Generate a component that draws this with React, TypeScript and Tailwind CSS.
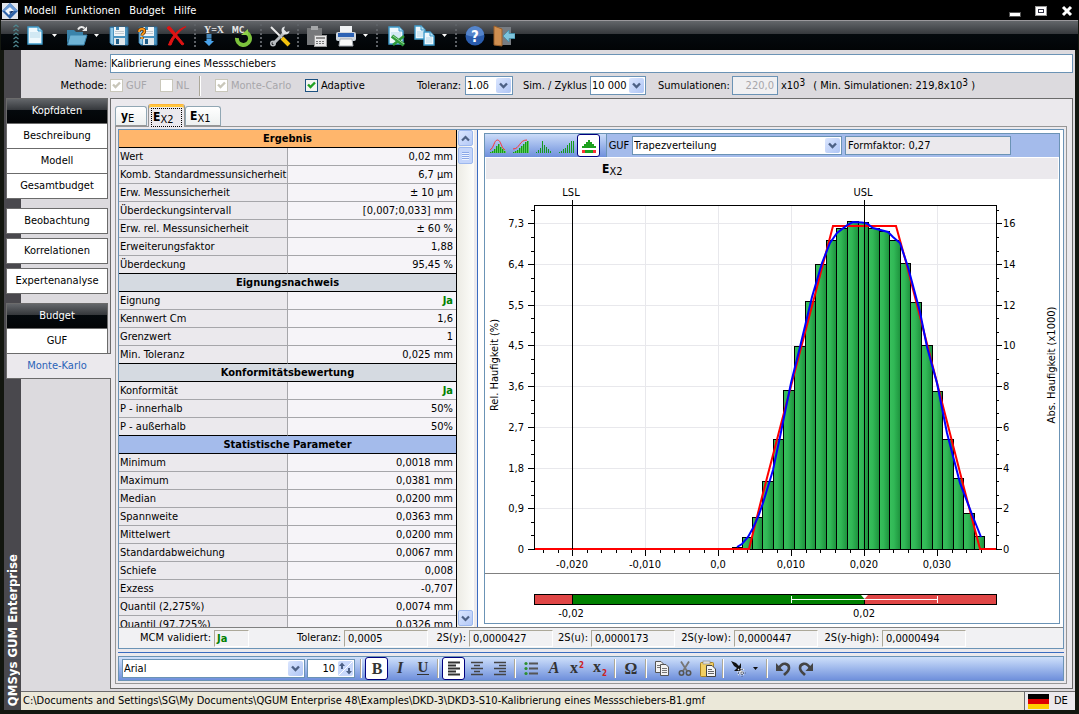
import { ReactNode, useState } from "react";

interface Section {
  title: string;
  tone: string;
  rows: [string, string][];
}

const sections: Section[] = [
  {
    title: "Ergebnis",
    tone: "bg-[#ffb66c]",
    rows: [
      ["Wert", "0,02 mm"],
      ["Komb. Standardmessunsicherheit", "6,7 µm"],
      ["Erw. Messunsicherheit", "± 10 µm"],
      ["Überdeckungsintervall", "[0,007;0,033] mm"],
      ["Erw. rel. Messunsicherheit", "± 60 %"],
      ["Erweiterungsfaktor", "1,88"],
      ["Überdeckung", "95,45 %"],
    ],
  },
  {
    title: "Eignungsnachweis",
    tone: "bg-[#d5dae1]",
    rows: [
      ["Eignung", "Ja"],
      ["Kennwert Cm", "1,6"],
      ["Grenzwert", "1"],
      ["Min. Toleranz", "0,025 mm"],
    ],
  },
  {
    title: "Konformitätsbewertung",
    tone: "bg-[#d5dae1]",
    rows: [
      ["Konformität", "Ja"],
      ["P - innerhalb", "50%"],
      ["P - außerhalb", "50%"],
    ],
  },
  {
    title: "Statistische Parameter",
    tone: "bg-[#a4bbeb]",
    rows: [
      ["Minimum", "0,0018 mm"],
      ["Maximum", "0,0381 mm"],
      ["Median", "0,0200 mm"],
      ["Spannweite", "0,0363 mm"],
      ["Mittelwert", "0,0200 mm"],
      ["Standardabweichung", "0,0067 mm"],
      ["Schiefe", "0,008"],
      ["Exzess", "-0,707"],
      ["Quantil (2,275%)", "0,0074 mm"],
      ["Quantil (97,725%)", "0,0326 mm"],
    ],
  },
];

const checks = [
  { label: "MCM validiert:", value: "Ja", labelClass: "w-[92px]", boxClass: "w-[35px] pl-[2px] font-bold text-[#008000]" },
  { label: "Toleranz:", value: "0,0005", labelClass: "w-[92px]", boxClass: "w-[84px] pl-[3px]" },
  { label: "2S(y):", value: "0,0000427", labelClass: "w-[38px]", boxClass: "w-[84px] pl-[3px]" },
  { label: "2S(u):", value: "0,0000173", labelClass: "w-[35px]", boxClass: "w-[84px] pl-[3px]" },
  { label: "2S(y-low):", value: "0,0000447", labelClass: "w-[56px]", boxClass: "w-[84px] pl-[3px]" },
  { label: "2S(y-high):", value: "0,0000494", labelClass: "w-[61px]", boxClass: "w-[84px] pl-[3px]" },
];

const barEdges = [
  732, 742, 752, 762, 773, 783, 794, 805, 815, 826, 836, 847, 858, 868, 879, 889, 900, 910, 921, 932, 942, 953, 963,
  974, 984,
];
const barTops = [
  547, 537, 517, 481, 439, 390, 346, 301, 264, 240, 228, 221, 222, 228, 231, 240, 263, 302, 345, 391, 439, 478, 513,
  536,
];
const yMajor = [223, 264, 305, 345, 386, 427, 468, 508, 549];
const leftLabels = ["7,3", "6,4", "5,5", "4,5", "3,6", "2,7", "1,8", "0,9", "0"];
const rightLabels = ["16", "14", "12", "10", "8", "6", "4", "2", "0"];
const yMinor = [210, 237, 251, 278, 291, 318, 332, 359, 373, 400, 413, 440, 454, 481, 495, 522, 535];
const xMajor = [572, 645, 718, 791, 864, 937];
const xLabels = ["-0,020", "-0,010", "0,0", "0,010", "0,020", "0,030"];
const xMinor = Array.from({ length: 31 }, (_, i) => Math.round(543 + i * 14.6)).filter((x) => x < 996);

const font = "font-['DejaVu_Sans_Condensed','DejaVu_Sans',sans-serif]";

/* ---------- small controls ---------- */

const Chevron = () => (
  <span className="pointer-events-none absolute top-px right-px bottom-px flex w-[15px] items-center justify-center rounded-xs bg-linear-to-br from-[#dbe6fe] to-[#afc5f5]">
    <svg width="9" height="7" viewBox="0 0 9 7">
      <path d="M1 1.5 4.5 5 8 1.5" fill="none" stroke="#4d6185" strokeWidth="2.4" />
    </svg>
  </span>
);

const Select = ({ id, label, options, className }: { id: string; label: string; options: string[]; className: string }) => (
  <span className={`relative block h-[19px] border border-[#6b93b5] bg-white ${className}`}>
    <select id={id} aria-label={label} className="block h-full w-full appearance-none bg-transparent pl-px outline-none">
      {options.map((option) => (
        <option key={option}>{option}</option>
      ))}
    </select>
    <Chevron />
  </span>
);

interface CheckProps {
  label: string;
  checked?: boolean;
  disabled?: boolean;
  className: string;
}

const Check = ({ label, checked = false, disabled = false, className }: CheckProps) => {
  const [on, setOn] = useState(checked);
  return (
    <label className={`flex items-center gap-[3px] ${disabled ? "text-[#a7a6aa]" : ""} ${className}`}>
      <span className="relative block size-[13px]">
        <input
          type="checkbox"
          checked={on}
          disabled={disabled}
          onChange={() => setOn(!on)}
          className={`block size-[13px] appearance-none border ${disabled ? "border-[#c9c7ba] bg-white" : "border-[#1c5180] bg-[#f4f4f1]"}`}
        />
        {on && (
          <svg className="pointer-events-none absolute inset-0" width="13" height="13" viewBox="0 0 13 13">
            <path d="M3 5.5 5.5 8 10 3.5" fill="none" stroke={disabled ? "#c9c7ba" : "#21a121"} strokeWidth="2.4" />
          </svg>
        )}
      </span>
      {label}
    </label>
  );
};

const DarkButton = ({ label, children }: { label: string; children: ReactNode }) => (
  <button type="button" aria-label={label} className="flex h-full w-[29px] items-center justify-center">
    <svg width="22" height="22" viewBox="0 0 22 22">
      {children}
    </svg>
  </button>
);

const Caret = ({ color }: { color: string }) => (
  <button type="button" aria-label="Mehr" className="mr-[2px] flex h-full w-[11px] items-center justify-center">
    <svg width="5" height="3" viewBox="0 0 5 3">
      <path d="M0 0H5L2.5 3Z" fill={color} />
    </svg>
  </button>
);

const Dots = () => (
  <span className="flex h-full w-2 justify-center py-[3px]">
    <span className="border-l-2 border-dotted border-[#5d6166]" />
  </span>
);

const EditButton = ({ label, active = false, children }: { label: string; active?: boolean; children: ReactNode }) => (
  <button
    type="button"
    aria-label={label}
    aria-pressed={active}
    className={`flex size-[23px] shrink-0 items-center justify-center ${active ? "rounded-[3px] border border-[#00007f] bg-white" : ""}`}
  >
    <svg width="18" height="18" viewBox="0 0 18 18" className="shrink-0">
      {children}
    </svg>
  </button>
);

const Groove = () => (
  <span className="flex h-[19px] w-2 justify-center">
    <span className="border-l border-r border-l-[#aca899] border-r-white" />
  </span>
);

const Variable = ({ main, sub }: { main: string; sub: string }) => (
  <span className="whitespace-nowrap">
    <b className="text-xs">{main}</b>
    <span className="relative top-[2px] text-[11px]">{sub}</span>
  </span>
);

const Cubed = () => <span className="relative -top-[3px] text-[10px]">3</span>;

/* ---------- icon parts ---------- */

const Floppy = () => (
  <>
    <path d="M2 2H20V20H4L2 18Z" fill="#4a93c0" stroke="#2b6b97" />
    <path d="M2.5 3H5V19H4L2.5 17.5Z" fill="#8cc6e6" />
    <rect x="6" y="2" width="11" height="9" fill="#f2f5f7" />
    <rect x="8" y="2" width="3" height="3" fill="#3d86b4" />
    <path d="M7 6.500H16M7 8.500H16" stroke="#c2cbd2" />
    <rect x="6" y="13" width="11" height="7" fill="#dfe6ea" />
    <rect x="8" y="14" width="3" height="5" fill="#1f5e8a" />
  </>
);

const Page = ({ x, y, w, h }: { x: number; y: number; w: number; h: number }) => (
  <g>
    <path
      d={`M${x} ${y}H${x + w - 4}L${x + w} ${y + 4}V${y + h}H${x}Z`}
      fill="#eef8fd"
      stroke="#3f9ccc"
      strokeWidth="1.4"
    />
    <path d={`M${x + w - 4} ${y}V${y + 4}H${x + w}`} fill="#b9e0f3" stroke="#3f9ccc" />
    <path d={`M${x + 2} ${y + 6}H${x + w - 2}M${x + 2} ${y + 8}H${x + w - 2}M${x + 2} ${y + 10}H${x + w - 2}`} stroke="#b5d9ea" />
  </g>
);

const Columns = ({ heights, filled = false }: { heights: number[]; filled?: boolean }) => (
  <g shapeRendering="crispEdges">
    {heights.map((h, i) => (
      <g key={i}>
        {filled && <rect x={2 + i * 2} y={16 - h} width="2" height={h} fill="#5fc95f" />}
        <rect x={2 + i * 2} y={16 - h} width="1" height={h} fill="#159a1c" />
      </g>
    ))}
  </g>
);

/* ---------- window chrome ---------- */

const TitleBar = () => (
  <header className="flex h-5 items-center bg-black pt-px pr-[6px] pl-[2px] text-white">
    <svg width="16" height="16" viewBox="0 0 16 16">
      <rect width="16" height="16" fill="#dfe3ea" />
      <path d="M8 0 16 8 8 16 0 8Z" fill="#2e62a8" />
      <path d="M8 0 16 8H12L8 4 4 8H0Z" fill="#6b9ad4" />
      <path d="M8 4 12 8 9 11V8.500H7L8 10.500 7 12 3 8Z" fill="#f4f7fb" />
      <path d="M9 11 12 8H8.500V10Z" fill="#173a70" />
    </svg>
    <nav className="ml-[6px] flex gap-[9px]">
      {["Modell", "Funktionen", "Budget", "Hilfe"].map((item) => (
        <button key={item} type="button">
          {item}
        </button>
      ))}
    </nav>
    <div className="ml-auto flex gap-[14px]">
      <button type="button" aria-label="Minimieren">
        <svg width="12" height="12" viewBox="0 0 12 12">
          <rect x="0.500" y="7.500" width="11" height="4" fill="#fff" stroke="#555" />
        </svg>
      </button>
      <button type="button" aria-label="Maximieren">
        <svg width="12" height="12" viewBox="0 0 12 12">
          <rect x="0.500" y="1.500" width="11" height="9" fill="#fff" stroke="#999" />
          <rect x="3.500" y="4.500" width="5" height="3" fill="#fff" stroke="#334" />
        </svg>
      </button>
      <button type="button" aria-label="Schließen">
        <svg width="12" height="12" viewBox="0 0 12 12">
          <path d="M2 2 10 10M10 2 2 10" stroke="#fff" strokeWidth="3" />
        </svg>
      </button>
    </div>
  </header>
);

const MainToolbar = () => (
  <div className="mx-px flex h-[30px] items-center border-t border-[#9a989c] bg-[linear-gradient(#63666a,#34373b_46%,#04090d_46%,#020406)] pl-[11px]">
    <svg width="8" height="24" viewBox="0 0 8 24" className="shrink-0">
      {[1, 5, 9, 13, 17, 21].map((y) => (
        <path key={y} d={`M1.500 ${y + 2}L4 ${y}L6.500 ${y + 2}`} fill="none" stroke="#4f8790" strokeWidth="1.200" />
      ))}
    </svg>
    <DarkButton label="Neu">
      <Page x={4} y={2} w={14} h={17} />
    </DarkButton>
    <Caret color="#fff" />
    <DarkButton label="Öffnen">
      <path d="M1 5H8L10 7H17V10H4L1 19Z" fill="#3a83ab" />
      <path d="M4 10H21L18 20H1.500Z" fill="#6fb3d5" stroke="#3a83ab" />
      <path d="M12 4.500C14 1 17 1.500 18.500 3.500" fill="none" stroke="#eee" strokeWidth="2" />
      <path d="M16 6H21V1.500Z" fill="#eee" />
    </DarkButton>
    <Caret color="#fff" />
    <DarkButton label="Speichern">
      <Floppy />
    </DarkButton>
    <DarkButton label="Speichern unter">
      <Floppy />
      <path d="M2 7C2 3 8 3 7.500 6.500C7.300 8.500 5 8.500 5 10.500M5 12V14" fill="none" stroke="#5d2b00" strokeWidth="3.200" />
      <path d="M2 7C2 3 8 3 7.500 6.500C7.300 8.500 5 8.500 5 10.500M5 12V14" fill="none" stroke="#ff9c1a" strokeWidth="1.800" />
    </DarkButton>
    <DarkButton label="Löschen">
      <path d="M1 3C2 1 4 1 5 3L18 19 16 20C11 14 6 8 1 3Z" fill="#e01313" stroke="#e01313" />
      <path d="M20 1.500C13 6 8 12 5 20H2.500C5 12 12 4 20 1.500Z" fill="#e01313" stroke="#e01313" />
    </DarkButton>
    <Dots />
    <DarkButton label="Berechnen">
      <text x="11" y="8" textAnchor="middle" fontSize="10" fontWeight="700" fill="#e6e6e6" fontFamily="Liberation Serif">
        Y=X
      </text>
      <path d="M3.500 10H8.500M3.500 12H8.500" stroke="#5fb0ee" strokeWidth="1.400" />
      <path d="M3.500 13.500H8.500V16H11L6 21 1 16H3.500Z" fill="#4aa3ea" />
    </DarkButton>
    <DarkButton label="Monte-Carlo starten">
      <path d="M15 8A6.500 6.500 0 1 1 5 13" fill="none" stroke="#7cc23c" strokeWidth="4" />
      <path d="M9 10H16V4Z" fill="#8fd14a" />
      <text x="6" y="8" textAnchor="middle" fontSize="8" fontWeight="700" fill="#e6e6e6">
        MC
      </text>
    </DarkButton>
    <Dots />
    <DarkButton label="Einstellungen">
      <path d="M2 2 13 13" stroke="#e9e9e9" strokeWidth="2" />
      <path d="M13 13 20 20" stroke="#f4c20d" strokeWidth="4" />
      <path d="M4 19 16 7" stroke="#b9bdc1" strokeWidth="3" />
      <path d="M16 1.500A4 4 0 1 0 20.500 6L17.500 7 15 4.500Z" fill="#dfe1e3" />
      <circle cx="4" cy="18.500" r="2.200" fill="none" stroke="#b9bdc1" strokeWidth="1.600" />
    </DarkButton>
    <Dots />
    <DarkButton label="Einfügen">
      <rect x="1" y="3" width="15" height="17" fill="#77797b" />
      <rect x="5" y="1" width="7" height="4" fill="#a5a7a9" />
      <rect x="8.500" y="10.500" width="12" height="11" fill="#e8e8e8" stroke="#999" />
      <rect x="10" y="12" width="9" height="2" fill="#8b8b8b" />
      <path d="M10 16.500H19M10 18.500H19" stroke="#777" strokeDasharray="2 1" />
    </DarkButton>
    <DarkButton label="Drucken">
      <rect x="5" y="1" width="12" height="7" fill="#f1f3f5" />
      <rect x="1" y="7" width="20" height="9" rx="2" fill="#cfd6de" />
      <rect x="3" y="8" width="16" height="4" fill="#2c62b4" />
      <path d="M5 14H17L18 21H4Z" fill="#fafafa" stroke="#a8adb3" />
    </DarkButton>
    <Caret color="#fff" />
    <Dots />
    <DarkButton label="Excel">
      <Page x={4} y={2} w={14} h={17} />
      <path d="M7 11 19 20" stroke="#2f9a3a" strokeWidth="4" />
      <path d="M19 11 8 20" stroke="#2f9a3a" strokeWidth="2.600" />
      <path d="M8 11 19 19" stroke="#9bd6a0" />
    </DarkButton>
    <DarkButton label="Kopieren">
      <Page x={1} y={1} w={10} h={13} />
      <Page x={10} y={7} w={10} h={13} />
    </DarkButton>
    <Caret color="#fff" />
    <Dots />
    <DarkButton label="Hilfe">
      <circle cx="11" cy="11" r="9.500" fill="#2a5cad" />
      <path d="M2 10A9 9 0 0 1 20 10Q11 13 2 10Z" fill="#5585cc" />
      <text x="11" y="16.500" textAnchor="middle" fontSize="15" fontWeight="700" fill="#fff">
        ?
      </text>
    </DarkButton>
    <DarkButton label="Beenden">
      <rect x="1" y="2" width="17" height="18" fill="#777c82" />
      <path d="M1 1 9 4V21L1 20Z" fill="#d08f50" stroke="#99602c" />
      <path d="M10 11 16 5V8.500H22V13.500H16V17Z" fill="#7ec4dc" stroke="#3f8ea9" strokeWidth="0.800" />
    </DarkButton>
  </div>
);

const FormRows = () => (
  <form className="pt-1 pb-[3px]">
    <div className="flex items-center pr-[2px]">
      <label htmlFor="name" className="w-[86px] text-right">
        Name:
      </label>
      <input
        id="name"
        defaultValue="Kalibrierung eines Messschiebers"
        className="ml-[3px] h-[19px] min-w-0 flex-1 border border-[#6b93b5] bg-white outline-none"
      />
    </div>
    <div className="mt-[3px] flex h-[19px] items-center whitespace-nowrap">
      <span className="w-[86px] text-right">Methode:</span>
      <Check label="GUF" checked disabled className="ml-[3px] w-[50px]" />
      <Check label="NL" disabled className="w-[39px]" />
      <span className="h-5 w-[16px] border-l border-[#aca899]">
        <span className="block h-full border-l border-white" />
      </span>
      <Check label="Monte-Carlo" checked disabled className="w-[90px]" />
      <Check label="Adaptive" checked className="w-[76px]" />
      <label htmlFor="tol" className="w-[80px] text-right">
        Toleranz:
      </label>
      <Select id="tol" label="Toleranz" options={["1.0δ"]} className="ml-1 w-[48px]" />
      <label htmlFor="cycle" className="ml-[10px]">
        Sim. / Zyklus
      </label>
      <Select id="cycle" label="Sim. / Zyklus" options={["10 000"]} className="ml-[3px] w-[56px]" />
      <label htmlFor="sims" className="ml-3">
        Sumulationen:
      </label>
      <input
        id="sims"
        disabled
        defaultValue="220,0"
        className="ml-[2px] h-[19px] w-[46px] border border-[#6b93b5] bg-[#f0f0f2] pr-[3px] text-right text-[#a7a6aa]"
      />
      <span className="ml-[3px]">
        x10
        <Cubed />
      </span>
      <span className="ml-2">
        ( Min. Simulationen: 219,8x10
        <Cubed /> )
      </span>
    </div>
  </form>
);

const NavHead = ({ children }: { children: ReactNode }) => (
  <h2 className="mr-[2px] flex h-[26px] items-center justify-center border border-[#6b6b6b] bg-[linear-gradient(#63666a,#34373b_46%,#04090d_46%,#020406)] text-white">
    {children}
  </h2>
);

const NavItem = ({ joined = false, children }: { joined?: boolean; children: ReactNode }) => (
  <button
    type="button"
    className={`mr-[2px] flex h-[26px] items-center justify-center border border-[#6b6b6b] bg-white ${joined ? "-mt-px" : ""}`}
  >
    {children}
  </button>
);

const SideNav = () => (
  <nav className="relative z-10 -ml-[15px] flex w-[104px] shrink-0 flex-col">
    <NavHead>Kopfdaten</NavHead>
    <NavItem joined>Beschreibung</NavItem>
    <NavItem joined>Modell</NavItem>
    <NavItem joined>Gesamtbudget</NavItem>
    <div className="my-[9px] flex flex-col gap-1">
      <NavItem>Beobachtung</NavItem>
      <NavItem>Korrelationen</NavItem>
      <NavItem>Expertenanalyse</NavItem>
    </div>
    <NavHead>Budget</NavHead>
    <NavItem joined>GUF</NavItem>
    <button
      type="button"
      aria-current="page"
      className="-mt-px -mr-px flex h-[26px] items-center justify-center border border-r-0 border-[#6b6b6b] bg-[#ebe9ed] pr-1 text-[#2a63b8]"
    >
      Monte-Karlo
    </button>
  </nav>
);

const Tabs = () => (
  <div role="tablist" className="relative z-10 -mb-px flex h-[23px] items-end">
    <button
      type="button"
      role="tab"
      className="mr-px mb-px flex h-5 w-8 items-center rounded-t-[3px] border border-[#91a7b4] border-b-[#969696] bg-linear-to-b from-white to-[#edf0f0] pl-[5px]"
    >
      <Variable main="y" sub="E" />
    </button>
    <button
      type="button"
      role="tab"
      aria-selected="true"
      className="h-[23px] w-[37px] rounded-t-[3px] border border-b-0 border-[#969696] border-t-[#ffb437] bg-[#ebe9ed] shadow-[inset_0_2px_0_#ffc73c]"
    >
      <span className="mx-[2px] mt-[2px] flex h-[19px] items-center border border-dotted border-black pl-px">
        <Variable main="E" sub="X2" />
      </span>
    </button>
    <button
      type="button"
      role="tab"
      className="mb-px flex h-5 w-9 items-center rounded-t-[3px] border border-[#91a7b4] border-b-[#969696] bg-linear-to-b from-white to-[#edf0f0] pl-1"
    >
      <Variable main="E" sub="X1" />
    </button>
  </div>
);

const ResultTable = () => (
  <div className="min-h-0 min-w-0 flex-1 overflow-y-auto border-r border-black [scrollbar-width:none]">
    <table className="w-full table-fixed border-separate border-spacing-0">
      {sections.map((section) => (
        <tbody key={section.title}>
          <tr>
            <th colSpan={2} className={`h-[18px] border-b border-black p-0 pt-px leading-4 font-bold ${section.tone}`}>
              {section.title}
            </th>
          </tr>
          {section.rows.map(([label, value], i) => {
            const line = i === section.rows.length - 1 && section.rows.length < 10 ? "border-b-black" : "border-b-[#a6a6aa]";
            return (
              <tr key={label}>
                <td className={`h-[18px] w-1/2 border-r border-b border-r-[#a6a6aa] bg-[#ebe9ed] p-0 pt-px pl-px leading-4 whitespace-nowrap ${line}`}>
                  {label}
                </td>
                <td className={`h-[18px] border-b bg-[#f6f4f8] p-0 pt-px pr-[3px] text-right leading-4 ${line} ${value === "Ja" ? "font-bold text-[#008000]" : ""}`}>
                  {value}
                </td>
              </tr>
            );
          })}
        </tbody>
      ))}
    </table>
  </div>
);

const ScrollArrow = ({ label, d }: { label: string; d: string }) => (
  <button
    type="button"
    aria-label={label}
    className="flex h-4 w-[15px] items-center justify-center rounded-xs border border-[#9db8ee] bg-linear-to-br from-[#dbe6fe] to-[#b4c9f7]"
  >
    <svg width="9" height="7" viewBox="0 0 9 7">
      <path d={d} fill="none" stroke="#4d6185" strokeWidth="2.200" />
    </svg>
  </button>
);

const Scrollbar = () => (
  <div className="flex w-[17px] shrink-0 flex-col items-center bg-linear-to-r from-[#ecebe4] to-[#fdfdfa] pb-px">
    <ScrollArrow label="Nach oben" d="M1 5.500 4.500 2 8 5.500" />
    <div className="mt-px flex h-[17px] w-[15px] flex-col items-center justify-center gap-px rounded-xs border border-[#9db8ee] bg-[#c4d5fb]">
      {[0, 1, 2, 3].map((i) => (
        <span key={i} className="h-px w-[7px] bg-[#8ba7e8] shadow-[0_1px_0_#eef3ff]" />
      ))}
    </div>
    <div className="mt-auto">
      <ScrollArrow label="Nach unten" d="M1 1.500 4.500 5 8 1.500" />
    </div>
  </div>
);

const Histogram = () => (
  <svg viewBox="485 179 574 394" className="min-h-0 w-full flex-1" fontSize="11" role="img" aria-label="Histogramm">
    <defs>
      <linearGradient id="bar">
        <stop offset="0" stopColor="#38c05c" />
        <stop offset="0.400" stopColor="#31b856" />
        <stop offset="1" stopColor="#1c913c" />
      </linearGradient>
    </defs>
    <g shapeRendering="crispEdges" fill="none" stroke="#e8e8ec">
      {yMajor.map((y) => (
        <path key={y} d={`M534 ${y}.5H996`} />
      ))}
      {xMajor.map((x) => (
        <path key={x} d={`M${x}.5 205V549`} />
      ))}
    </g>
    <g shapeRendering="crispEdges" stroke="#000">
      {barTops.map((top, i) => (
        <rect key={i} x={barEdges[i] + 0.5} y={top + 0.5} width={barEdges[i + 1] - barEdges[i]} height={549 - top} fill="url(#bar)" />
      ))}
    </g>
    <g shapeRendering="crispEdges" fill="none" stroke="#000">
      <rect x="534.500" y="205.500" width="462" height="344" />
      {yMajor.map((y) => (
        <path key={y} d={`M528 ${y}.5H534M997 ${y}.5H1002`} />
      ))}
      {yMinor.map((y) => (
        <path key={y} d={`M531 ${y}.5H534M997 ${y}.5H999`} />
      ))}
      {xMajor.map((x) => (
        <path key={x} d={`M${x}.5 549V556`} />
      ))}
      {xMinor.map((x) => (
        <path key={x} d={`M${x}.5 549V553`} />
      ))}
    </g>
    <path d="M535 549H749L762 497 780 428 833 226H896L906 262 964 488 980 549H996" fill="none" stroke="#f00" strokeWidth="2" />
    <path
      d="M737 547 742 544 748 537 753 528 758 517 763 503 770 480 773 470 780 437 783 422 791 383 800 347 812 297 822 263 830 243 837 233 848 224.500 853 222 862 222.500 867 223.500 873 228 888 232 893 237 900 243 908 267 920 312 927 347 937 383 947 433 960 483 973 517 981 537"
      fill="none"
      stroke="#00f"
      strokeWidth="2"
    />
    <path d="M572.500 200V549M864.500 200V549" stroke="#000" shapeRendering="crispEdges" />
    <g textAnchor="middle">
      <text x="571" y="196">
        LSL
      </text>
      <text x="863" y="196">
        USL
      </text>
      {xLabels.map((label, i) => (
        <text key={label} x={xMajor[i]} y="568">
          {label}
        </text>
      ))}
      <text transform="translate(498 365) rotate(-90)">Rel. Haufigkeit (%)</text>
      <text transform="translate(1055 365) rotate(-90)">Abs. Haufigkeit (x1000)</text>
    </g>
    {yMajor.map((y, i) => (
      <g key={y}>
        <text x="524" y={y + 4} textAnchor="end">
          {leftLabels[i]}
        </text>
        <text x="1003" y={y + 4}>
          {rightLabels[i]}
        </text>
      </g>
    ))}
  </svg>
);

const ToleranceBar = () => (
  <svg viewBox="485 574 574 49" className="h-[49px] w-full" fontSize="11" role="img" aria-label="Toleranzbereich">
    <g shapeRendering="crispEdges">
      <rect x="534.500" y="594.500" width="462" height="10" fill="#e04646" stroke="#000" />
      <rect x="572.500" y="594.500" width="292" height="10" fill="#008000" stroke="#000" />
      <path d="M791.500 596V603M937.500 596V603M791 599.500H937" fill="none" stroke="#fff" />
    </g>
    <path d="M861 595H868L864.500 599Z" fill="#fff" />
    <g textAnchor="middle">
      <text x="571" y="617">
        -0,02
      </text>
      <text x="864" y="617">
        0,02
      </text>
    </g>
  </svg>
);

const ChartPanel = () => (
  <section className="flex min-h-0 min-w-0 flex-1 flex-col border border-[#6b93b5] bg-white">
    <div className="flex h-[23px] shrink-0 items-center bg-[#a4bbeb]">
      <div className="flex h-full w-[122px] shrink-0 items-center border-r border-[#6b93b5] bg-linear-to-b from-[#cbdcf8] to-[#7090dc]">
        <EditButton label="Dichte">
          <Columns heights={[1, 2, 4, 7, 9, 6, 4, 2]} filled />
          <path d="M2 13C6 11 6 3 9.500 3S13 11 17 13" fill="none" stroke="#f33" />
        </EditButton>
        <EditButton label="Verteilung">
          <Columns heights={[1, 2, 3, 5, 7, 9, 11, 12]} filled />
          <path d="M2 12C9 12 8 3 16 3" fill="none" stroke="#f33" />
        </EditButton>
        <EditButton label="Histogramm">
          <Columns heights={[1, 3, 5, 12, 8, 6, 4, 2]} />
        </EditButton>
        <EditButton label="Summenhistogramm">
          <Columns heights={[1, 2, 4, 5, 8, 10, 12, 12]} />
        </EditButton>
        <EditButton label="Toleranz" active>
          <path d="M2 11V9H4V7H6V5H8V3H10V5H12V7H14V9H16V11Z" fill="#1ea01e" shapeRendering="crispEdges" />
          <path d="M2 14.500H5M13 14.500H16" stroke="#f33" strokeWidth="3" />
          <path d="M5 14.500H13" stroke="#1ea01e" strokeWidth="3" />
        </EditButton>
      </div>
      <label htmlFor="dist" className="w-6 text-center">
        GUF
      </label>
      <Select id="dist" label="GUF" options={["Trapezverteilung"]} className="ml-px w-[210px]" />
      <output className="ml-[3px] h-[19px] w-[166px] border border-[#6b93b5] bg-[#ebe9ed] pl-[2px] leading-[17px]">
        Formfaktor: 0,27
      </output>
    </div>
    <h3 className="mx-px mt-px flex h-[21px] shrink-0 items-center bg-[#ebe9ed] pl-[116px]">
      <Variable main="E" sub="X2" />
    </h3>
    <Histogram />
    <div className="shrink-0 border-t border-[#808080]">
      <ToleranceBar />
    </div>
  </section>
);

const CheckRow = () => (
  <div className="flex h-[21px] shrink-0 items-center border-t border-[#808080] bg-[#f1f1f3] whitespace-nowrap">
    {checks.map((check) => (
      <div key={check.label} className="flex items-center">
        <span className={`text-right ${check.labelClass}`}>{check.label}</span>
        <output className={`ml-[3px] block h-[17px] border border-t-[#aca899] border-r-white border-b-white border-l-[#aca899] leading-[15px] ${check.boxClass}`}>
          {check.value}
        </output>
      </div>
    ))}
  </div>
);

const serif = "Liberation Serif";

const EditToolbar = () => (
  <div className="flex h-[25px] shrink-0 items-center border border-[#6b93b5] bg-linear-to-b from-[#cfe0fa] to-[#6f8fdb] pl-[3px]">
    <Select id="font" label="Schriftart" options={["Arial"]} className="w-[183px] shrink-0" />
    <span className="relative ml-[2px] block h-[19px] w-[48px] shrink-0 border border-[#6b93b5] bg-white">
      <input aria-label="Schriftgröße" defaultValue="10" className="h-full w-full bg-transparent pr-[19px] text-right outline-none" />
      <span className="pointer-events-none absolute top-px right-px bottom-px w-[15px] rounded-xs bg-[#c9d9fb]">
        <svg width="15" height="15" viewBox="0 0 15 15">
          <path d="M1 14 14 1" stroke="#fff" />
          <path d="M1 5 4 1.500 7 5H5V8H3V5ZM8 10 11 13.500 14 10H12V7H10V10Z" fill="#4d6185" />
        </svg>
      </span>
    </span>
    <span className="ml-[2px] flex h-full items-center">
      <Groove />
      <EditButton label="Fett" active>
        <text x="9" y="14" textAnchor="middle" fontSize="16" fontWeight="700" fontFamily={serif} fill="#333">
          B
        </text>
      </EditButton>
      <EditButton label="Kursiv">
        <text x="9" y="13" textAnchor="middle" fontSize="16" fontWeight="700" fontStyle="italic" fontFamily={serif} fill="#333">
          I
        </text>
      </EditButton>
      <EditButton label="Unterstrichen">
        <text x="9" y="12" textAnchor="middle" fontSize="15" fontWeight="700" fontFamily={serif} fill="#333">
          U
        </text>
        <path d="M3 14.500H15" stroke="#333" />
      </EditButton>
      <Groove />
      <EditButton label="Linksbündig" active>
        <path d="M3 2.500H15M3 5.500H11M3 8.500H15M3 11.500H11M3 14.500H15" stroke="#333" strokeWidth="2" />
      </EditButton>
      <EditButton label="Zentriert">
        <path d="M3 2.500H15M6 5.500H12M3 8.500H15M6 11.500H12M3 14.500H15" stroke="#444" strokeWidth="1.600" />
      </EditButton>
      <EditButton label="Rechtsbündig">
        <path d="M3 2.500H15M8 5.500H15M3 8.500H15M8 11.500H15M3 14.500H15" stroke="#444" strokeWidth="1.600" />
      </EditButton>
      <Groove />
      <EditButton label="Aufzählung">
        <path d="M7 3.500H16M7 8.500H16M7 13.500H16" stroke="#555" strokeWidth="2" />
        <g fill="#2f8f2f">
          <circle cx="4" cy="3.500" r="1.600" />
          <circle cx="4" cy="8.500" r="1.600" />
          <circle cx="4" cy="13.500" r="1.600" />
        </g>
      </EditButton>
      <EditButton label="Schrift">
        <text x="9" y="13" textAnchor="middle" fontSize="16" fontWeight="700" fontStyle="italic" fontFamily={serif} fill="#333">
          A
        </text>
      </EditButton>
      <EditButton label="Hochgestellt">
        <text x="2" y="13" fontSize="16" fontWeight="700" fontFamily={serif} fill="#333">
          x
        </text>
        <text x="11" y="8" fontSize="8" fontWeight="700" fill="#c22">
          2
        </text>
      </EditButton>
      <EditButton label="Tiefgestellt">
        <text x="2" y="12" fontSize="16" fontWeight="700" fontFamily={serif} fill="#333">
          x
        </text>
        <text x="11" y="16" fontSize="8" fontWeight="700" fill="#c22">
          2
        </text>
      </EditButton>
      <Groove />
      <EditButton label="Symbol">
        <text x="9" y="14" textAnchor="middle" fontSize="16" fontWeight="700" fontFamily={serif} fill="#333">
          Ω
        </text>
      </EditButton>
      <Groove />
      <EditButton label="Kopieren">
        <path d="M2.500 1.500H8L10.500 4V12.500H2.500Z" fill="#f3f3f3" stroke="#555" />
        <path d="M7.500 4.500H13L15.500 7V15.500H7.500Z" fill="#f3f3f3" stroke="#555" />
        <path d="M9 8.500H14M9 10.500H14M9 12.500H14M4 5.500H7M4 7.500H7" stroke="#777" />
      </EditButton>
      <EditButton label="Ausschneiden">
        <path d="M5 1.500 11 11M13 1.500 7 11" stroke="#777" strokeWidth="1.800" />
        <circle cx="5.500" cy="13" r="2.200" fill="none" stroke="#555" strokeWidth="1.600" />
        <circle cx="12.500" cy="13" r="2.200" fill="none" stroke="#555" strokeWidth="1.600" />
      </EditButton>
      <EditButton label="Einfügen">
        <rect x="1.500" y="2.500" width="13" height="14" rx="1" fill="#f2cf63" stroke="#a98220" />
        <rect x="4" y="1" width="7" height="3" fill="#ddd" stroke="#888" strokeWidth="0.600" />
        <path d="M7.500 5.500H13L16.500 9V16.500H7.500Z" fill="#f5f5f5" stroke="#444" />
        <path d="M9 9.500H13M9 11.500H15M9 13.500H15" stroke="#666" />
      </EditButton>
      <Groove />
      <EditButton label="Zeiger">
        <path d="M1 1 6 3 9 6 11 3V11H4L7 8 4 6Z" fill="#111" />
        <path d="M7 12H15M11 8V16M8 9 14 15M14 9 8 15" stroke="#eee" strokeWidth="1.200" strokeDasharray="1.500 1" />
        <path d="M8 13H16M12 9V17" stroke="#333" strokeDasharray="1 1.500" />
      </EditButton>
      <Caret color="#111" />
      <Groove />
      <EditButton label="Rückgängig">
        <path d="M5 8C9 1 15 4 15 8C15 11 12 13 10 15" fill="none" stroke="#444" strokeWidth="2.600" />
        <path d="M2 3V11H9.500Z" fill="#444" />
      </EditButton>
      <EditButton label="Wiederholen">
        <path d="M13 8C9 1 3 4 3 8C3 11 6 13 8 15" fill="none" stroke="#444" strokeWidth="2.600" />
        <path d="M16 3V11H8.500Z" fill="#444" />
      </EditButton>
    </span>
  </div>
);

const StatusBar = () => (
  <footer className="mt-[2px] flex h-[19px] shrink-0 items-stretch border-t border-[#6b6b6b] bg-[#ebe8d9]">
    <span className="flex min-w-0 flex-1 items-center pl-[2px] whitespace-nowrap">
      C:\Documents and Settings\SG\My Documents\QGUM Enterprise 48\Examples\DKD-3\DKD3-S10-Kalibrierung eines
      Messschiebers-B1.gmf
    </span>
    <span className="flex w-[51px] items-center gap-[5px] border-l border-[#6b6b6b] bg-[#ebe9ed] pl-[3px]">
      <svg width="21" height="15" viewBox="0 0 21 15">
        <rect width="21" height="15" fill="#ffce00" />
        <rect width="21" height="10" fill="#d00" />
        <rect width="21" height="5" fill="#000" />
      </svg>
      DE
    </span>
  </footer>
);

const App = () => {
  return (
    <div className={`flex h-screen flex-col bg-[#12160f] text-[11px] leading-[14px] text-black ${font}`}>
      <TitleBar />
      <MainToolbar />
      <div className="flex min-h-0 flex-1 px-1 pb-1">
        <aside className="flex w-[17px] shrink-0 items-end justify-center bg-[#49484d] pb-1">
          <span className="rotate-180 text-[13px] leading-[17px] font-bold whitespace-nowrap text-white [writing-mode:vertical-rl]">
            QMSys GUM Enterprise
          </span>
        </aside>
        <div className="flex min-w-0 flex-1 flex-col bg-[#dcdade]">
          <FormRows />
          <div className="flex min-h-0 flex-1 pr-[2px]">
            <SideNav />
            <main className="flex min-w-0 flex-1 flex-col border border-[#6b6b6b] bg-[#ebe9ed] pt-[5px] pr-[5px] pb-1 pl-1">
              <Tabs />
              <div className="flex min-h-0 flex-1 flex-col border border-[#969696] p-[2px]">
                <div className="flex min-h-0 flex-1 flex-col border border-[#6b93b5] bg-white">
                  <div className="flex min-h-0 flex-1">
                    <div className="flex w-[359px] shrink-0 border-r border-[#3a6cc0] bg-[#ebe9ed] pr-[3px]">
                      <ResultTable />
                      <Scrollbar />
                    </div>
                    <div className="flex min-w-0 flex-1 py-[3px] pr-[3px] pl-[6px]">
                      <ChartPanel />
                    </div>
                  </div>
                  <CheckRow />
                </div>
                <hr className="my-[3px] border-[#3a6cc0]" />
                <EditToolbar />
              </div>
            </main>
          </div>
          <StatusBar />
        </div>
      </div>
    </div>
  );
};

export default App;
